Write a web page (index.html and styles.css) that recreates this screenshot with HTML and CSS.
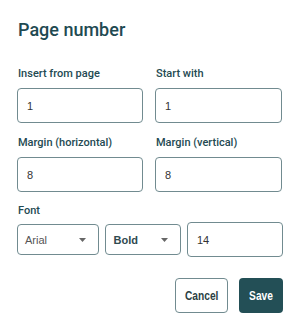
FILE: index.html
```html
<!DOCTYPE html>
<html lang="en">
<head>
  <meta charset="UTF-8" />
  <meta name="viewport" content="width=device-width, initial-scale=1.0"/>
  <title>Page number</title>
  <link rel="stylesheet" href="styles.css">
</head>
<body>
  <div class="dialog">
    <h1>Page number</h1>

    <div class="field-grid">
      <div class="field">
        <label for="fromPage">Insert from page</label>
        <input id="fromPage" type="text" value="1">
      </div>
      <div class="field">
        <label for="startWith">Start with</label>
        <input id="startWith" type="text" value="1">
      </div>
      <div class="field">
        <label for="marginH">Margin (horizontal)</label>
        <input id="marginH" type="text" value="8">
      </div>
      <div class="field">
        <label for="marginV">Margin (vertical)</label>
        <input id="marginV" type="text" value="8">
      </div>
    </div>

    <div class="field">
      <label for="fontFamily">Font</label>
      <div class="font-row">
        <div class="select-box family">
          <span>Arial</span>
          <svg width="7" height="4" viewBox="0 0 7 4"><path d="M0 0h7L3.5 4z" fill="#666"/></svg>
        </div>
        <div class="select-box weight">
          <span>Bold</span>
          <svg width="7" height="4" viewBox="0 0 7 4"><path d="M0 0h7L3.5 4z" fill="#666"/></svg>
        </div>
        <input class="size-input" type="text" value="14">
      </div>
    </div>

    <div class="actions">
      <button class="cancel-btn"><span>Cancel</span></button>
      <button class="save-btn"><span>Save</span></button>
    </div>
  </div>
</body>
</html>
```

FILE: styles.css
```css
body {
  margin: 0;
  background: #fff;
  font-family: Roboto, "Liberation Sans", sans-serif;
}

.dialog {
  padding: 17px 17px 18px 17px;
}

h1 {
  margin: 0 0 24px 1px;
  font-size: 18px;
  font-weight: 500;
  color: #1f4a52;
  line-height: 26px;
}

.field-grid {
  display: grid;
  grid-template-columns: 126px 127px;
  column-gap: 12px;
  row-gap: 13px;
  margin-bottom: 12px;
}

.field label {
  display: block;
  font-size: 11px;
  font-weight: 500;
  color: #244a52;
  line-height: 14px;
  margin: 0 0 7px 1px;
}

.field input {
  box-sizing: border-box;
  width: 100%;
  height: 35px;
  border: 1px solid #718b90;
  border-radius: 4px;
  padding: 0 9px;
  font-family: "Liberation Sans", Arial, sans-serif;
  font-size: 11px;
  color: #333;
  outline: none;
}

.font-row {
  display: flex;
  align-items: center;
  gap: 6px;
  margin-top: -3px;
}

.select-box {
  box-sizing: border-box;
  height: 31px;
  border: 1px solid #718b90;
  border-radius: 4px;
  padding: 0 12px 0 7px;
  display: flex;
  align-items: center;
  justify-content: space-between;
  font-family: "Liberation Sans", Arial, sans-serif;
  font-size: 11px;
  color: #555;
}

.select-box.family { width: 83px; }
.select-box.weight { width: 76px; font-weight: bold; color: #2f4a50; }

.font-row .size-input {
  width: 96px;
  flex: none;
  font-size: 11px;
}

.actions {
  display: flex;
  justify-content: flex-end;
  gap: 11px;
  margin-top: 21px;
}

.actions button {
  height: 35px;
  padding: 0;
  border-radius: 4px;
  font-family: "Liberation Sans", Arial, sans-serif;
  font-size: 12px;
  font-weight: bold;
  cursor: pointer;
}

/* button labels in the mock are a narrow face */
.actions button span {
  display: inline-block;
  transform: scaleX(0.85);
}

.cancel-btn {
  width: 53px;
  background: #fff;
  color: #2b3f44;
  border: 1px solid #718b90;
}

.save-btn {
  width: 44px;
  background: #234f56;
  color: #fff;
  border: none;
}
```
